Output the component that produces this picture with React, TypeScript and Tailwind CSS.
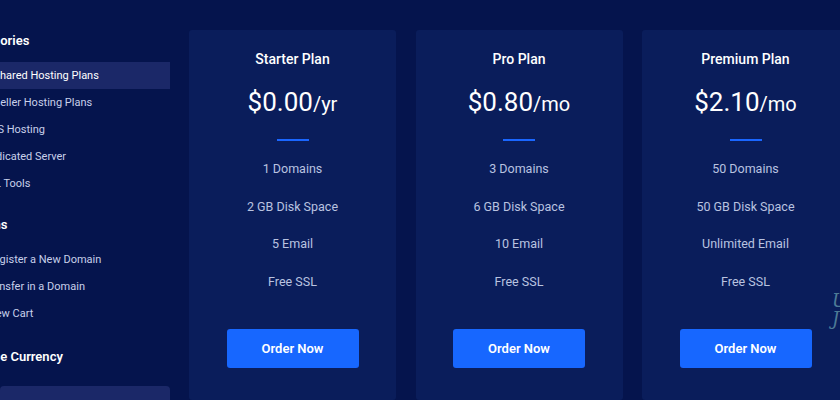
const categories = [
  { label: "Shared Hosting Plans", offset: "ml-[-6.5px]", active: true },
  { label: "Reseller Hosting Plans", offset: "ml-[-18px]", active: false },
  { label: "VPS Hosting", offset: "ml-[-16.5px]", active: false },
  { label: "Dedicated Server", offset: "ml-[-17px]", active: false },
  { label: "SSL Tools", offset: "ml-[-18px]", active: false },
];

const actions = [
  { label: "Register a New Domain", offset: "ml-[-13px]" },
  { label: "Transfer in a Domain", offset: "ml-[-16.5px]" },
  { label: "View Cart", offset: "ml-[-14px]" },
];

const plans = [
  { name: "Starter Plan", price: "$0.00", period: "/yr", features: ["1 Domains", "2 GB Disk Space", "5 Email", "Free SSL"] },
  { name: "Pro Plan", price: "$0.80", period: "/mo", features: ["3 Domains", "6 GB Disk Space", "10 Email", "Free SSL"] },
  { name: "Premium Plan", price: "$2.10", period: "/mo", features: ["50 Domains", "50 GB Disk Space", "Unlimited Email", "Free SSL"] },
];

const Sidebar = () => (
  <div className="w-[170px] shrink-0 overflow-hidden pt-[31px]">
    {/* Categories */}
    <h2 className="ml-[-34px] h-5 whitespace-nowrap text-[13px] font-semibold leading-5 text-white">Categories</h2>
    <ul className="mt-[11px]">
      {categories.map((item) => (
        <li
          key={item.label}
          className={`flex h-[27px] items-center whitespace-nowrap text-[11px] ${item.active ? "bg-[#1b2868] text-white" : "text-[#c8d0ea]"}`}
        >
          <span className={`${item.offset} pt-[2px]`}>{item.label}</span>
        </li>
      ))}
    </ul>

    {/* Actions */}
    <h2 className="mt-[18px] ml-[-37px] h-5 whitespace-nowrap text-[13px] font-semibold leading-5 text-white">Actions</h2>
    <ul className="mt-[11px]">
      {actions.map((item) => (
        <li key={item.label} className="flex h-[27px] items-center whitespace-nowrap text-[11px] text-[#c8d0ea]">
          <span className={`${item.offset} pt-[2px]`}>{item.label}</span>
        </li>
      ))}
    </ul>

    {/* Currency */}
    <h2 className="mt-[20px] ml-[-37px] h-5 whitespace-nowrap text-[13px] font-semibold leading-5 text-white">Choose Currency</h2>
    <div className="mt-[19px] h-9 rounded-sm bg-[#1b2868]" />
  </div>
);

const PlanCard = ({ plan }: { plan: (typeof plans)[number] }) => (
  <div className="flex w-[207px] shrink-0 flex-col items-center rounded-[3px] bg-[#0a1d5b] pt-[19px] pb-[19px]">
    <h3 className="h-5 text-[14px] font-medium leading-5 text-white">{plan.name}</h3>
    <div className="mt-[16px] flex h-[34px] items-baseline leading-[34px] text-white">
      <span className="text-[26px]">{plan.price}</span>
      <span className="text-[20px]">{plan.period}</span>
    </div>
    <div className="mt-[20px] h-[2px] w-8 bg-[#1a66ff]" />
    <ul className="mt-[10px] w-full">
      {plan.features.map((f) => (
        <li key={f} className="flex h-[37.5px] items-center justify-center text-[12.5px] text-[#b9c3e0]">
          {f}
        </li>
      ))}
    </ul>
    <button className="mt-[28px] h-[39px] w-[132px] rounded-[3px] bg-[#1767ff] text-[13px] font-semibold text-white">
      Order Now
    </button>
  </div>
);

export default function App() {
  return (
    <div className="relative flex h-[400px] w-[840px] overflow-hidden bg-[#05144d] font-['Roboto',sans-serif]">
      <Sidebar />
      <div className="ml-[19px] flex gap-[19.5px] pt-[30px]">
        {plans.map((p) => (
          <PlanCard key={p.name} plan={p} />
        ))}
      </div>
      {/* decorative script at the edge */}
      <span className="absolute top-[292px] left-[832px] font-['DejaVu_Serif',serif] text-[18px] italic leading-[18px] text-[#4d7a96]">
        U<br />J
      </span>
    </div>
  );
}
